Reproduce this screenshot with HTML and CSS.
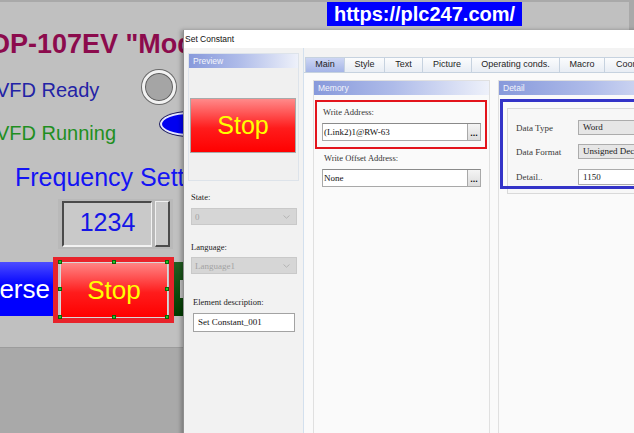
FILE: index.html
```html
<!DOCTYPE html>
<html lang="en">
<head>
<meta charset="utf-8">
<title>HMI Editor - Set Constant</title>
<link rel="stylesheet" href="styles.css">
</head>
<body>
<div class="workspace">
  <div class="hmi-screen">
    <div class="hmi-text hmi-title">OP-107EV "Modbus RTU"</div>
    <div class="hmi-text lbl-ready">VFD Ready</div>
    <div class="lamp lamp-ready"></div>
    <div class="hmi-text lbl-running">VFD Running</div>
    <div class="lamp lamp-run"></div>
    <div class="hmi-text lbl-freq">Frequency Setting</div>
    <div class="numeric">
      <div class="num-value">1234</div>
      <div class="num-spin"></div>
    </div>
    <div class="hmi-btn btn-reverse"><span>Reverse</span></div>
    <div class="selection">
      <div class="btn-stop">Stop</div>
      <i class="handle h-l h-t"></i>
      <i class="handle h-c h-t"></i>
      <i class="handle h-r h-t"></i>
      <i class="handle h-l h-m"></i>
      <i class="handle h-r h-m"></i>
      <i class="handle h-l h-b"></i>
      <i class="handle h-c h-b"></i>
      <i class="handle h-r h-b"></i>
    </div>
    <div class="hmi-btn btn-forward"><span class="fwd-mark"></span></div>
  </div>

  <div class="url-tag">https://plc247.com/</div>

  <div class="dialog">
    <div class="titlebar">Set Constant</div>
    <div class="dlg-body">
      <aside class="side">
        <section class="group preview">
          <div class="group-head">Preview</div>
          <div class="preview-body">
            <div class="pv-stop">Stop</div>
          </div>
        </section>
        <div class="field-label state-label">State:</div>
        <div class="combo">
          <span>0</span>
          <svg width="7" height="4" viewBox="0 0 7 4"><polyline points="0.5,0.5 3.5,3.2 6.5,0.5" fill="none" stroke="#b4b4b4" stroke-width="1"/></svg>
        </div>
        <div class="field-label lang-label">Language:</div>
        <div class="combo">
          <span>Language1</span>
          <svg width="7" height="4" viewBox="0 0 7 4"><polyline points="0.5,0.5 3.5,3.2 6.5,0.5" fill="none" stroke="#b4b4b4" stroke-width="1"/></svg>
        </div>
        <div class="field-label desc-label">Element description:</div>
        <div class="desc-box">Set Constant_001</div>
      </aside>

      <div class="main">
        <nav class="tabs">
          <span class="tab active">Main</span>
          <span class="tab">Style</span>
          <span class="tab">Text</span>
          <span class="tab">Picture</span>
          <span class="tab">Operating conds.</span>
          <span class="tab">Macro</span>
          <span class="tab">Coordinates</span>
        </nav>
        <div class="pane">
          <section class="group memory">
            <div class="group-head">Memory</div>
            <div class="mem-body">
              <div class="mark-red">
                <div class="mem-label">Write Address:</div>
                <div class="addr-box"><span>(Link2)1@RW-63</span><b class="browse">...</b></div>
              </div>
              <div class="mem-label offset-label">Write Offset Address:</div>
              <div class="addr-box offset-box"><span>None</span><b class="browse">...</b></div>
            </div>
          </section>
          <section class="group detail">
            <div class="group-head">Detail</div>
            <div class="detail-panel">
              <div class="drow"><span class="drow-label">Data Type</span><div class="dcombo">Word</div></div>
              <div class="drow"><span class="drow-label">Data Format</span><div class="dcombo">Unsigned Decimal</div></div>
              <div class="drow drow-input"><span class="drow-label">Detail..</span><div class="dcombo dinput">1150</div></div>
            </div>
            <div class="mark-blue"></div>
          </section>
        </div>
      </div>
    </div>
  </div>
</div>
</body>
</html>
```

FILE: styles.css
```css
* { box-sizing: border-box; }

html, body {
  margin: 0;
  padding: 0;
  width: 634px;
  height: 433px;
  overflow: hidden;
}

body {
  background: #a9a9a9;
  font-family: "Liberation Sans", Arial, sans-serif;
}

.workspace {
  position: relative;
  width: 634px;
  height: 433px;
  padding-top: 2px;
  background: #a9a9a9;
}

/* ---------- HMI screen canvas ---------- */
.hmi-screen {
  position: relative;
  width: 629px;
  height: 346px;
  background: #c0c0c0;
  border-bottom: 1px solid #9c9c9c;
  overflow: hidden;
}

.hmi-text {
  position: absolute;
  white-space: nowrap;
  line-height: 1;
}

.hmi-title {
  left: -11px;
  top: 29px;
  font-size: 27px;
  font-weight: bold;
  color: #8c0b4d;
}

.lbl-ready {
  left: -4px;
  top: 78px;
  font-size: 20px;
  color: #2323a6;
}

.lbl-running {
  left: -4px;
  top: 121px;
  font-size: 20px;
  color: #1f8f1f;
}

.lbl-freq {
  left: 15px;
  top: 163px;
  font-size: 25px;
  color: #1414f4;
}

.lamp {
  position: absolute;
  border-radius: 50%;
}

.lamp-ready {
  left: 142px;
  top: 68px;
  width: 34px;
  height: 34px;
  background: #a5a5a5;
  border: 3px solid #f2f2f2;
  box-shadow: 0 0 0 1px #6a6a6a, inset 0 0 0 1px #5e5e5e;
}

.lamp-run {
  left: 160px;
  top: 110px;
  width: 58px;
  height: 24px;
  background: #0000f0;
  border: 2px solid #e6e6ff;
  box-shadow: 0 0 0 1px #1a1a60;
}

.numeric {
  position: absolute;
  left: 58px;
  top: 197px;
  width: 115px;
  height: 50px;
  display: flex;
  gap: 3px;
  padding: 2px 3px 2px 4px;
  background: #b9b9b9;
}

.num-value {
  width: 90px;
  height: 46px;
  display: flex;
  align-items: center;
  justify-content: center;
  padding-bottom: 3px;
  font-size: 25px;
  color: #1515e6;
  background: #c9c9c9;
  border-top: 2px solid #4a4a4a;
  border-left: 2px solid #4a4a4a;
  border-right: 1px solid #f2f2f2;
  border-bottom: 2px solid #f2f2f2;
}

.num-spin {
  width: 15px;
  height: 46px;
  background: #c9c9c9;
  border-top: 1px solid #f0f0f0;
  border-left: 1px solid #f0f0f0;
  border-right: 2px solid #4c4c4c;
  border-bottom: 2px solid #4c4c4c;
}

.hmi-btn {
  position: absolute;
  display: flex;
  align-items: center;
  overflow: hidden;
  white-space: nowrap;
  font-size: 26px;
}

.btn-reverse {
  left: 0;
  top: 260px;
  width: 53px;
  height: 54px;
  justify-content: flex-end;
  padding-right: 3px;
  color: #ffffff;
  background: linear-gradient(#4d4dff, #0000ff 45%);
}

.btn-forward {
  left: 174px;
  top: 260px;
  width: 12px;
  height: 54px;
  background: linear-gradient(#235f23, #003c00);
}

.fwd-mark {
  position: absolute;
  left: 6px;
  top: 18px;
  width: 3px;
  height: 18px;
  background: #c8c8c8;
}

/* selected Stop object with its grab handles */
.selection {
  position: absolute;
  left: 53px;
  top: 255px;
  width: 121px;
  height: 66px;
  border: 5px solid #e8232b;
  background: #c6c6c6;
  padding: 0 1px 0 2px;
}

.btn-stop {
  height: 100%;
  display: flex;
  align-items: center;
  justify-content: center;
  font-size: 26px;
  color: #ffff00;
  background: linear-gradient(#ff8585, #ff1c1c 55%, #ff0000);
  border: 1px solid #d8d8d8;
}

.handle {
  position: absolute;
  width: 4px;
  height: 4px;
  background: #26c526;
  border: 1px solid #0a640a;
}

.h-l { left: 0; }
.h-c { left: 54px; }
.h-r { left: 107px; }
.h-t { top: -2px; }
.h-m { top: 25px; }
.h-b { top: 53px; }

/* ---------- watermark ---------- */
.url-tag {
  position: absolute;
  left: 327px;
  top: 2px;
  width: 195px;
  height: 24px;
  display: flex;
  align-items: center;
  justify-content: center;
  font-size: 20px;
  font-weight: bold;
  color: #ffffff;
  background: #0000ff;
  z-index: 3;
}

/* ---------- Set Constant dialog ---------- */
.dialog {
  position: absolute;
  left: 183px;
  top: 30px;
  width: 470px;
  height: 420px;
  display: flex;
  flex-direction: column;
  background: #ffffff;
  border-left: 1px solid #8f8f8f;
  box-shadow: -2px 0 4px rgba(0, 0, 0, 0.28);
  color: #1b1b1b;
  z-index: 2;
}

.titlebar {
  height: 18px;
  line-height: 18px;
  padding-left: 1px;
  font-size: 8.5px;
  color: #111111;
}

.dlg-body {
  flex: 1;
  display: flex;
  min-height: 0;
}

.side {
  width: 120px;
  flex: none;
  padding: 5px 0 0 4px;
  background: #f2f2f2;
  border-right: 1px solid #d3e0ee;
  font-family: "Liberation Serif", "Times New Roman", serif;
}

.group {
  border: 1px solid #dde3ea;
}

.group-head {
  height: 14px;
  line-height: 14px;
  padding-left: 4px;
  font-family: "Liberation Sans", Arial, sans-serif;
  font-size: 8.5px;
  color: #f3f5fb;
  background: linear-gradient(90deg, #8799db, #aebbe9 45%, #eef1fa);
}

.preview {
  width: 111px;
  height: 128px;
  background: #f0f0f0;
}

.preview-body {
  padding: 30px 0 0 1px;
}

.pv-stop {
  width: 106px;
  height: 55px;
  display: flex;
  align-items: center;
  justify-content: center;
  font-family: "Liberation Sans", Arial, sans-serif;
  font-size: 25px;
  color: #ffff00;
  background: linear-gradient(#ff8a8a, #ff1c1c 55%, #ff0000);
  border: 1px solid #a9a9a9;
}

.field-label {
  margin-left: 3px;
  font-size: 8.5px;
  line-height: 11px;
  color: #222222;
}

.state-label { margin-top: 11px; }
.lang-label { margin-top: 17px; }
.desc-label { margin-top: 23px; margin-left: 5px; }

.combo {
  width: 106px;
  height: 17px;
  margin-left: 3px;
  display: flex;
  align-items: center;
  justify-content: space-between;
  padding: 0 6px 0 3px;
  font-size: 9px;
  color: #a3a3a3;
  background: #d6d6d6;
  border: 1px solid #c9c9c9;
}

.state-label + .combo { margin-top: 5px; }
.lang-label + .combo { margin-top: 4px; }

.desc-box {
  width: 102px;
  height: 19px;
  margin: 5px 0 0 5px;
  padding-left: 4px;
  line-height: 17px;
  font-size: 9px;
  color: #111111;
  background: #ffffff;
  border: 1px solid #a3a3a3;
}

.main {
  flex: 1;
  display: flex;
  flex-direction: column;
  background: #f3f3f3;
}

.tabs {
  display: flex;
  height: 15px;
  margin-top: 9px;
  padding-left: 1px;
}

.tab {
  flex: none;
  height: 15px;
  margin-left: -1px;
  font-size: 9px;
  line-height: 13px;
  text-align: center;
  color: #1e1e1e;
  background: linear-gradient(#fbfcfd, #e8edf4);
  border: 1px solid #c6d2df;
  border-bottom: none;
}

.tab:first-child { margin-left: 0; }
.tab:nth-child(1) { width: 40px; }
.tab:nth-child(2) { width: 41px; }
.tab:nth-child(3) { width: 39px; }
.tab:nth-child(4) { width: 50px; }
.tab:nth-child(5) { width: 89px; }
.tab:nth-child(6) { width: 46px; }
.tab:nth-child(7) { width: 70px; text-align: left; padding-left: 11px; }

.tab.active {
  background: linear-gradient(#cdd6f3, #a5b5e7);
}

.pane {
  flex: 1;
  display: flex;
  gap: 8px;
  padding: 7px 0 0 9px;
  background: #fafafa;
  border-top: 1px solid #c6d2df;
  font-family: "Liberation Serif", "Times New Roman", serif;
}

.memory {
  flex: none;
  width: 177px;
  height: 400px;
  background: #fafafa;
  border-color: #e0e0e0;
}

.mem-body {
  padding: 5px 1px 0 1px;
}

.mark-red {
  width: 172px;
  height: 49px;
  padding: 5px 0 0 5px;
  border: 2px solid #e3141c;
}

.mem-label {
  padding-left: 1px;
  font-size: 8.5px;
  line-height: 11px;
  color: #333333;
}

.offset-label {
  margin: 4px 0 0 8px;
}

.addr-box {
  width: 159px;
  height: 18px;
  margin-top: 5px;
  display: flex;
  align-items: center;
  padding-left: 1px;
  font-size: 9px;
  color: #111111;
  background: #ffffff;
  border: 1px solid #a9a9a9;
  border-top-color: #8a8a8a;
}

.offset-box {
  margin-left: 7px;
}

.browse {
  margin-left: auto;
  width: 13px;
  height: 16px;
  font-family: "Liberation Sans", Arial, sans-serif;
  font-size: 9px;
  line-height: 19px;
  text-align: center;
  color: #111111;
  background: linear-gradient(#f4f4f4, #dcdcdc);
  border-left: 1px solid #a9a9a9;
}

.detail {
  position: relative;
  flex: none;
  width: 200px;
  height: 400px;
  background: #fafafa;
  border-color: #e0e0e0;
}

.detail-panel {
  height: 86px;
  margin: 13px 0 0 8px;
  padding-top: 11px;
  background: #f7f7f7;
  border: 1px solid #d9d9d9;
}

.drow {
  display: flex;
  align-items: center;
  height: 15px;
}

.drow + .drow { margin-top: 9px; }

.drow-input {
  height: 16px;
}

.drow + .drow-input { margin-top: 10px; }

.drow-label {
  width: 70px;
  flex: none;
  padding-left: 8px;
  font-size: 9px;
  color: #3a3a3a;
}

.dcombo {
  flex: 1;
  height: 100%;
  padding-left: 4px;
  font-size: 9px;
  line-height: 13px;
  white-space: nowrap;
  color: #1a1a1a;
  background: #e6e6e6;
  border: 1px solid #acacac;
}

.dinput {
  background: #ffffff;
  line-height: 14px;
}

.mark-blue {
  position: absolute;
  left: 1px;
  top: 18px;
  width: 220px;
  height: 90px;
  border: 3px solid #3434c8;
}
```
